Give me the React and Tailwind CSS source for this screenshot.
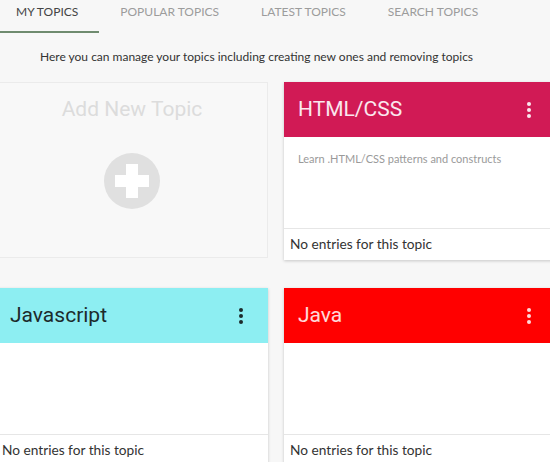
import React from 'react';

const tabs = [
  { label: 'MY TOPICS', active: true },
  { label: 'POPULAR TOPICS' },
  { label: 'LATEST TOPICS' },
  { label: 'SEARCH TOPICS' },
];

const topics = [
  { title: 'HTML/CSS', desc: 'Learn .HTML/CSS patterns and constructs', head: 'bg-[#d11a55]', text: 'text-white/90' },
  { title: 'Javascript', desc: '', head: 'bg-[#8deef2]', text: 'text-[#1c2a2b]' },
  { title: 'Java', desc: '', head: 'bg-[#ff0000]', text: 'text-white/85' },
];

function MoreVert({ className }) {
  return (
    <svg viewBox="0 0 24 24" className={className} fill="currentColor">
      <circle cx="12" cy="6" r="2" />
      <circle cx="12" cy="12" r="2" />
      <circle cx="12" cy="18" r="2" />
    </svg>
  );
}

function AddCard() {
  return (
    <div className="h-[176px] border border-[#ebebeb] bg-[#f8f8f8] flex flex-col items-center">
      <div className="pt-[13px] text-[21px] leading-[26px] text-[#dcdcdc] font-['Roboto',sans-serif]">
        Add New Topic
      </div>
      <div className="mt-[31px] w-[56px] h-[56px] rounded-full bg-[#e0e0e0] relative">
        <div className="absolute left-[11px] top-[22px] w-[34px] h-[12px] bg-white" />
        <div className="absolute left-[22px] top-[11px] w-[12px] h-[34px] bg-white" />
      </div>
    </div>
  );
}

function TopicCard({ topic }) {
  return (
    <div className="h-[178px] bg-white flex flex-col shadow-[0_1px_3px_rgba(0,0,0,0.2)]">
      <div className={`h-[55px] flex items-center justify-between pl-[14px] pr-[15px] ${topic.head} ${topic.text}`}>
        <span className="text-[21px] font-['Roboto',sans-serif]">{topic.title}</span>
        <MoreVert className="w-6 h-6" />
      </div>
      <div className="flex-1 px-[14px] pt-[15px] text-[11px] leading-[14px] text-[#9a9a9a]">
        {topic.desc}
      </div>
      <div className="h-[32px] border-t border-[#e6e6e6] flex items-center px-[6px] text-[13.7px] text-[#333]">
        No entries for this topic
      </div>
    </div>
  );
}

export default function App() {
  return (
    <div className="min-h-[462px] bg-[#f7f7f7] overflow-hidden font-['Lato',sans-serif]">
      <div className="flex h-[33px]">
        {tabs.map((t, i) => (
          <div
            key={t.label}
            className={`relative pt-[4px] ${i === 0 ? 'pl-[16px] pr-[21px]' : 'px-[21px]'} text-[12px] leading-[16px] ${
              t.active ? 'text-[#444]' : 'text-[#9c9c9c]'
            }`}
          >
            {t.label}
            {t.active && <div className="absolute left-0 right-0 bottom-0 h-[2px] bg-[#6f8b6f]" />}
          </div>
        ))}
      </div>

      <p className="mt-[16px] pl-[40px] text-[12px] leading-[16px] text-[#333]">
        Here you can manage your topics including creating new ones and removing topics
      </p>

      <div className="mt-[17px] ml-[-4px] grid grid-cols-[272px_272px] gap-x-4 gap-y-[28px]">
        <AddCard />
        {topics.map((t) => (
          <TopicCard key={t.title} topic={t} />
        ))}
      </div>
    </div>
  );
}
